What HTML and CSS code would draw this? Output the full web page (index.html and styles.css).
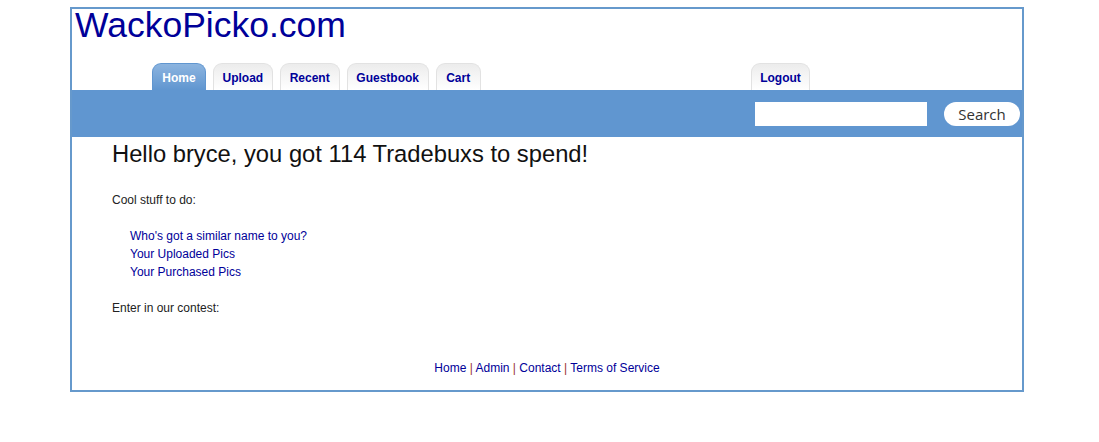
FILE: index.html
```html
<!DOCTYPE html>
<html>
<head>
<meta charset="utf-8">
<link rel="stylesheet" href="styles.css">
</head>
<body>
<div class="page">
  <div class="header">
    <a class="logo" href="#">WackoPicko.com</a>
    <ul class="tabs">
      <li class="tab active"><a href="#">Home</a></li>
      <li class="tab"><a href="#">Upload</a></li>
      <li class="tab tab-recent"><a href="#">Recent</a></li>
      <li class="tab tab-guest"><a href="#">Guestbook</a></li>
      <li class="tab tab-cart"><a href="#">Cart</a></li>
      <li class="tab logout"><a href="#">Logout</a></li>
    </ul>
  </div>
  <div class="bar">
    <form class="search">
      <input class="search-input" type="text">
      <button class="search-btn" type="button">Search</button>
    </form>
  </div>
  <div class="content">
    <h2 class="hello">Hello bryce, you got 114 Tradebuxs to spend!</h2>
    <p class="para">Cool stuff to do:</p>
    <ul class="links">
      <li><a href="#">Who's got a similar name to you?</a></li>
      <li><a href="#">Your Uploaded Pics</a></li>
      <li><a href="#">Your Purchased Pics</a></li>
    </ul>
    <p class="para para-last">Enter in our contest:</p>
  </div>
  <div class="footer">
    <a href="#">Home</a> <span class="sep">|</span> <a href="#">Admin</a> <span class="sep">|</span> <a href="#">Contact</a> <span class="sep">|</span> <a href="#">Terms of Service</a>
  </div>
</div>
</body>
</html>
```
FILE: styles.css
```css
html, body {
  margin: 0;
  padding: 0;
  background: #fff;
}
body {
  padding-top: 7px;
  font-family: "Liberation Sans", Arial, sans-serif;
  font-size: 12px;
  color: #222;
}
a {
  color: #000099;
  text-decoration: none;
}
.page {
  width: 950px;
  margin-left: 70px;
  border: 2px solid #6699cc;
}
.header {
  display: flex;
  flex-direction: column;
}
.logo {
  font-size: 35.5px;
  line-height: 33px;
  margin-left: 3px;
  height: 33px;
  color: #000099;
}
.tabs {
  list-style: none;
  margin: 21px 0 0 80px;
  padding: 0;
  display: flex;
  gap: 7px;
  height: 27px;
}
.tab {
  box-sizing: border-box;
  height: 27px;
  border: 1px solid #e2e2e2;
  border-bottom: none;
  border-radius: 9px 9px 0 0;
  background: linear-gradient(#ececec, #ffffff);
  display: flex;
  align-items: center;
  justify-content: center;
  padding: 0 8.5px;
  font-weight: bold;
  font-size: 12px;
}
.tab a {
  color: #000099;
  padding-top: 1px;
}
.tab.active {
  min-width: 54px;
  border-color: #6096d0;
  background: linear-gradient(#8cb4df, #6096d0);
}
.tab.active a {
  color: #fff;
}
.tab-recent {
  min-width: 60px;
}
.tab-guest {
  min-width: 82px;
}
.tab-cart {
  min-width: 45px;
}
.tab.logout {
  margin-left: 263px;
}
.bar {
  background: #6096d0;
  height: 47px;
  display: flex;
  justify-content: flex-end;
  align-items: center;
}
.search {
  display: flex;
  align-items: center;
  margin: 0 2px 0 0;
}
.search-input {
  box-sizing: border-box;
  width: 172px;
  height: 24px;
  border: none;
  margin: 0 17px 0 0;
  background: #fff;
}
.search-btn {
  box-sizing: border-box;
  width: 76px;
  height: 24px;
  border: none;
  border-radius: 12px;
  background: #fff;
  font-family: "Open Sans", "DejaVu Sans", sans-serif;
  font-size: 15px;
  color: #333;
  padding: 0;
}
.content {
  padding: 2px 40px 0 40px;
}
.hello {
  margin: 0;
  font-size: 23.75px;
  font-weight: normal;
  line-height: 30px;
  color: #111;
}
.para {
  margin: 22px 0 0 0;
  line-height: 18px;
}
.para-last {
  margin-top: 18px;
}
.links {
  list-style: none;
  margin: 18px 0 0 18px;
  padding: 0;
  line-height: 18px;
}
.footer {
  text-align: center;
  margin: 42px 0 0 0;
  padding-bottom: 13px;
  line-height: 18px;
  color: #555;
}
.sep {
  color: #993333;
}
```
